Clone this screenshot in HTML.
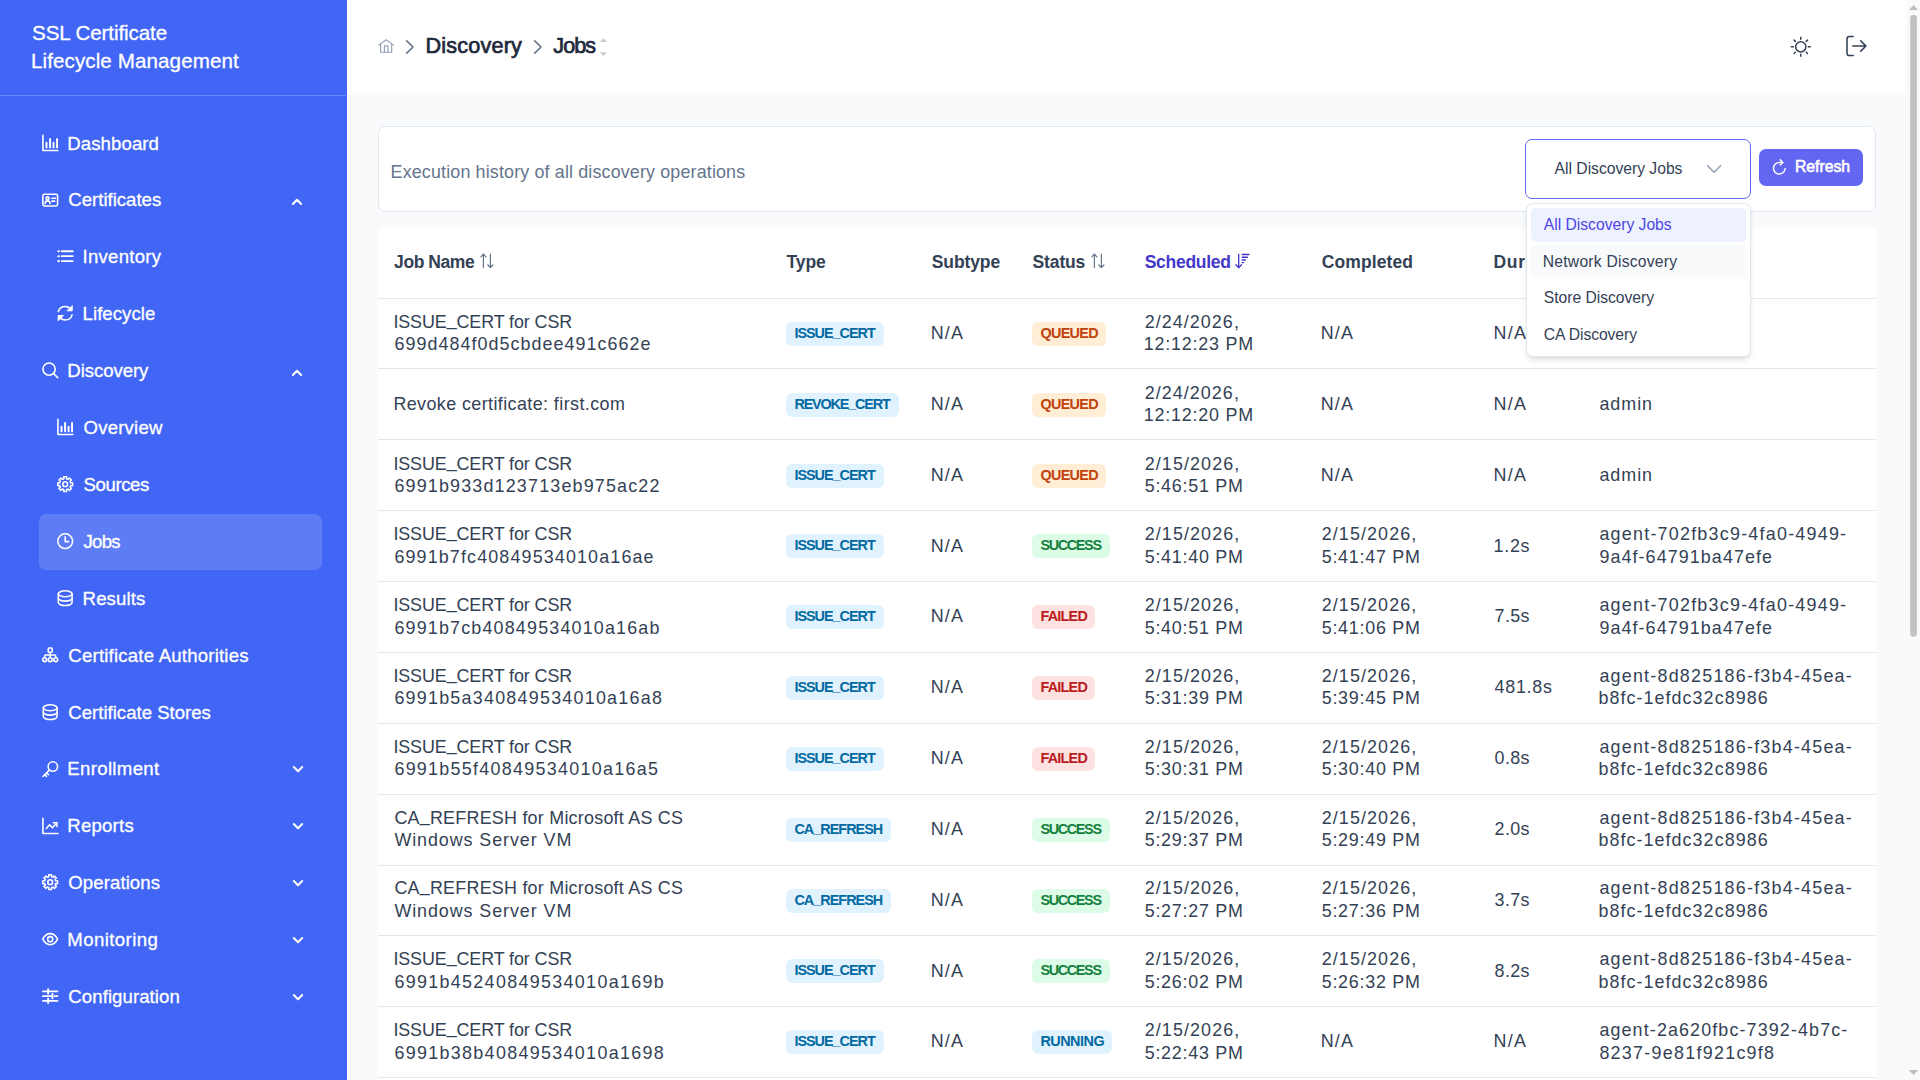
<!DOCTYPE html>
<html lang="en"><head><meta charset="utf-8"><title>SSL Certificate Lifecycle Management - Discovery Jobs</title>
<style>
*{box-sizing:border-box;margin:0;padding:0}
html,body{width:1920px;height:1080px;overflow:hidden;background:#f8fafc;font-family:"Liberation Sans", sans-serif;}
body{position:relative}
.t{position:absolute;white-space:nowrap;line-height:1;color:#334155}
.u{position:relative;top:-.15em}
.b .u{top:-.07em}
.t.w{color:#fff;-webkit-text-stroke:.3px #fff}
.ic{position:absolute;display:block;line-height:0}
.ic svg{display:block;overflow:visible}
#sidebar{position:absolute;left:0;top:0;width:347px;height:1080px;background:#4166f5;color:#fff}
.sb-line{position:absolute;left:0;top:95px;width:346px;height:1px;background:rgba(255,255,255,.22)}
.sb-active{position:absolute;background:rgba(255,255,255,.15);border-radius:7px}
#topbar{position:absolute;left:347px;top:0;width:1560px;height:95px;background:#fff}
#topbar .t,#topbar .ic{margin-left:-347px}
#white{position:absolute;left:347px;top:0;width:1px;height:1080px;background:#fff}
#card{position:absolute;left:378px;top:126px;width:1498px;height:86px;background:#fff;border:1px solid #e2e8f0;border-radius:7px}
#dd{position:absolute;left:1525.2px;top:139.2px;width:225.6px;height:59.6px;background:#fff;border:1px solid #6366f1;border-radius:7px}
#btn{position:absolute;left:1759px;top:149px;width:104.2px;height:37px;background:#6366f1;border-radius:7px}
#table{position:absolute;left:378px;top:228px;width:1498px;height:852px;background:#fff}
.hl{position:absolute;left:0;width:1498px;height:1px;background:#e2e8f0;margin-top:-228px}
.badge{position:absolute;height:24px;border-radius:6px}
#panel{position:absolute;left:1526.2px;top:203.4px;width:224.6px;height:153.4px;background:#fff;border:1px solid #e2e8f0;border-radius:7px;box-shadow:0 4px 6px -1px rgba(0,0,0,.1),0 2px 4px -2px rgba(0,0,0,.1)}
.opt{position:absolute;left:3.8px;width:215.2px;height:33.4px;border-radius:4.5px}
.opt.sel{background:#eef2ff}
.opt.hov{background:#f8fafc}
#sbar{position:absolute;left:1907px;top:0;width:13px;height:1080px;background:#f9fafc}
</style></head>
<body>
<div id="white"></div>
<div id="sidebar">
<div class="sb-line"></div>
<span class="t w" style="left:32.00px;top:23.00px;font-size:20.6px;letter-spacing:-0.100px;">SSL Certificate</span>
<span class="t w" style="left:31.00px;top:51.00px;font-size:20.6px;letter-spacing:0.088px;">Lifecycle Management</span>
<div class="sb-active" style="left:39px;top:514.25px;width:283px;height:55.25px"></div>
<span class="ic" style="left:41.70px;top:134.80px;"><svg width="16.4" height="16.4" viewBox="0 0 16 16" fill="none" stroke="currentColor" stroke-width="1.55" stroke-linecap="round" stroke-linejoin="round" ><path d="M0.9 0.4V15.1H15.6"/><path d="M4.4 7.6V12.1M7.9 3.8V12.1M11.3 7.6V12.1M14.7 3.8V12.1" stroke-width="1.9"/></svg></span>
<span class="t w" style="left:67.30px;top:135.00px;font-size:18.6px;letter-spacing:0.085px;">Dashboard</span>
<span class="ic" style="left:41.70px;top:191.70px;"><svg width="16.4" height="16.4" viewBox="0 0 16 16" fill="none" stroke="currentColor" stroke-width="1.55" stroke-linecap="round" stroke-linejoin="round" ><rect x="0.8" y="2.2" width="14.4" height="11.4" rx="1.6"/><circle cx="5.4" cy="6.2" r="1.45"/><path d="M2.9 11.3C3.1 9.4 4.2 8.7 5.4 8.7S7.7 9.4 7.9 11.3"/><path d="M9.8 6.1H13M9.8 9H12.2" stroke-width="1.7"/></svg></span>
<span class="t w" style="left:68.30px;top:191.00px;font-size:18.6px;letter-spacing:-0.009px;">Certificates</span>
<svg class="ic" style="left:290px;top:196px" width="14" height="12" viewBox="0 0 14 12" fill="none" stroke="#fff" stroke-width="2" stroke-linecap="round" stroke-linejoin="round"><path d="M2.9 8L7 3.7L11.1 8"/></svg>
<span class="ic" style="left:57.00px;top:248.00px;"><svg width="16.4" height="16.4" viewBox="0 0 16 16" fill="none" stroke="currentColor" stroke-width="1.55" stroke-linecap="round" stroke-linejoin="round" ><path d="M4.6 3.2H15.4M4.6 8H15.4M4.6 12.8H15.4" stroke-width="1.8"/><path d="M1.3 3.2H1.9M1.3 8H1.9M1.3 12.8H1.9" stroke-width="2"/></svg></span>
<span class="t w" style="left:82.60px;top:248.00px;font-size:18.6px;letter-spacing:0.239px;">Inventory</span>
<span class="ic" style="left:57.00px;top:304.80px;"><svg width="16.4" height="16.4" viewBox="0 0 16 16" fill="none" stroke="currentColor" stroke-width="1.55" stroke-linecap="round" stroke-linejoin="round" ><path d="M1.3 6.4C2.1 3.3 4.8 1.4 8 1.4C10.3 1.4 12.2 2.4 13.6 4.2"/><path d="M14.9 0.9V5.7H10.1Z" fill="currentColor" stroke-width="0.9"/><path d="M14.7 9.6C13.9 12.7 11.2 14.6 8 14.6C5.7 14.6 3.8 13.6 2.4 11.8"/><path d="M1.1 15.1V10.3H5.9Z" fill="currentColor" stroke-width="0.9"/></svg></span>
<span class="t w" style="left:82.60px;top:305.00px;font-size:18.6px;letter-spacing:0.044px;">Lifecycle</span>
<span class="ic" style="left:41.70px;top:361.80px;"><svg width="16.4" height="16.4" viewBox="0 0 16 16" fill="none" stroke="currentColor" stroke-width="1.55" stroke-linecap="round" stroke-linejoin="round" ><circle cx="6.9" cy="6.9" r="6"/><path d="M11.4 11.4L15.4 15.4"/></svg></span>
<span class="t w" style="left:67.30px;top:362.00px;font-size:18.6px;letter-spacing:-0.072px;">Discovery</span>
<svg class="ic" style="left:290px;top:367px" width="14" height="12" viewBox="0 0 14 12" fill="none" stroke="#fff" stroke-width="2" stroke-linecap="round" stroke-linejoin="round"><path d="M2.9 8L7 3.7L11.1 8"/></svg>
<span class="ic" style="left:57.00px;top:418.80px;"><svg width="16.4" height="16.4" viewBox="0 0 16 16" fill="none" stroke="currentColor" stroke-width="1.55" stroke-linecap="round" stroke-linejoin="round" ><path d="M0.9 0.4V15.1H15.6"/><path d="M4.4 7.6V12.1M7.9 3.8V12.1M11.3 7.6V12.1M14.7 3.8V12.1" stroke-width="1.9"/></svg></span>
<span class="t w" style="left:83.60px;top:419.00px;font-size:18.6px;letter-spacing:0.184px;">Overview</span>
<span class="ic" style="left:57.00px;top:475.80px;"><svg width="16.4" height="16.4" viewBox="0 0 16 16" fill="none" stroke="currentColor" stroke-width="1.55" stroke-linecap="round" stroke-linejoin="round" ><circle cx="8" cy="8" r="2.35" stroke-width="1.5"/><path d="M6.53 0.80 L9.47 0.80 L9.28 2.65 L10.87 3.31 L12.06 1.87 L14.13 3.94 L12.69 5.13 L13.35 6.72 L15.20 6.53 L15.20 9.47 L13.35 9.28 L12.69 10.87 L14.13 12.06 L12.06 14.13 L10.87 12.69 L9.28 13.35 L9.47 15.20 L6.53 15.20 L6.72 13.35 L5.13 12.69 L3.94 14.13 L1.87 12.06 L3.31 10.87 L2.65 9.28 L0.80 9.47 L0.80 6.53 L2.65 6.72 L3.31 5.13 L1.87 3.94 L3.94 1.87 L5.13 3.31 L6.72 2.65Z" stroke-width="1.45"/></svg></span>
<span class="t w" style="left:83.60px;top:476.00px;font-size:18.6px;letter-spacing:-0.427px;">Sources</span>
<span class="ic" style="left:57.00px;top:532.80px;"><svg width="16.4" height="16.4" viewBox="0 0 16 16" fill="none" stroke="currentColor" stroke-width="1.55" stroke-linecap="round" stroke-linejoin="round" ><circle cx="8" cy="8" r="7.2"/><path d="M8 3.8V8.4H11.2"/></svg></span>
<span class="t w" style="left:83.60px;top:533.00px;font-size:18.6px;letter-spacing:-0.793px;">Jobs</span>
<span class="ic" style="left:57.00px;top:589.80px;"><svg width="16.4" height="16.4" viewBox="0 0 16 16" fill="none" stroke="currentColor" stroke-width="1.55" stroke-linecap="round" stroke-linejoin="round" ><ellipse cx="8" cy="3.7" rx="6.7" ry="2.9"/><path d="M1.3 3.7V12.3C1.3 13.9 4.3 15.2 8 15.2S14.7 13.9 14.7 12.3V3.7"/><path d="M1.3 8C1.3 9.6 4.3 10.9 8 10.9S14.7 9.6 14.7 8"/></svg></span>
<span class="t w" style="left:82.60px;top:590.00px;font-size:18.6px;letter-spacing:0.108px;">Results</span>
<span class="ic" style="left:41.70px;top:646.80px;"><svg width="16.4" height="16.4" viewBox="0 0 16 16" fill="none" stroke="currentColor" stroke-width="1.55" stroke-linecap="round" stroke-linejoin="round" ><rect x="6.1" y="1" width="3.8" height="4.2" rx="0.9"/><path d="M8 5.4V10.2M2.6 10.2V9C2.6 8.2 3.1 7.8 3.8 7.8H12.2C12.9 7.8 13.4 8.2 13.4 9V10.2"/><circle cx="2.6" cy="12.4" r="1.9"/><circle cx="8" cy="12.4" r="1.9"/><circle cx="13.4" cy="12.4" r="1.9"/></svg></span>
<span class="t w" style="left:68.30px;top:647.00px;font-size:18.6px;letter-spacing:0.208px;">Certificate Authorities</span>
<span class="ic" style="left:41.70px;top:703.80px;"><svg width="16.4" height="16.4" viewBox="0 0 16 16" fill="none" stroke="currentColor" stroke-width="1.55" stroke-linecap="round" stroke-linejoin="round" ><ellipse cx="8" cy="3.7" rx="6.7" ry="2.9"/><path d="M1.3 3.7V12.3C1.3 13.9 4.3 15.2 8 15.2S14.7 13.9 14.7 12.3V3.7"/><path d="M1.3 8C1.3 9.6 4.3 10.9 8 10.9S14.7 9.6 14.7 8"/></svg></span>
<span class="t w" style="left:68.30px;top:704.00px;font-size:18.6px;">Certificate Stores</span>
<span class="ic" style="left:41.70px;top:760.80px;"><svg width="16.4" height="16.4" viewBox="0 0 16 16" fill="none" stroke="currentColor" stroke-width="1.55" stroke-linecap="round" stroke-linejoin="round" ><circle cx="10.6" cy="5.4" r="4.6"/><path d="M7.3 8.7L0.9 15.1M2.8 13.4L4.4 15M4.6 11.6L6.4 13.4" /></svg></span>
<span class="t w" style="left:67.30px;top:760.00px;font-size:18.6px;letter-spacing:0.332px;">Enrollment</span>
<svg class="ic" style="left:290.5px;top:763px" width="14" height="12" viewBox="0 0 14 12" fill="none" stroke="#fff" stroke-width="2" stroke-linecap="round" stroke-linejoin="round"><path d="M2.8 4L7 8.2L11.2 4"/></svg>
<span class="ic" style="left:41.70px;top:817.60px;"><svg width="16.4" height="16.4" viewBox="0 0 16 16" fill="none" stroke="currentColor" stroke-width="1.55" stroke-linecap="round" stroke-linejoin="round" ><path d="M0.9 0.4V15.1H15.6"/><path d="M4.2 10.2L7.4 6.6L10.2 9.6L14.2 5.2" stroke-width="1.5"/><path d="M11 4.7H14.6V8.3" stroke-width="1.5"/></svg></span>
<span class="t w" style="left:67.30px;top:817.00px;font-size:18.6px;letter-spacing:0.215px;">Reports</span>
<svg class="ic" style="left:290.5px;top:820px" width="14" height="12" viewBox="0 0 14 12" fill="none" stroke="#fff" stroke-width="2" stroke-linecap="round" stroke-linejoin="round"><path d="M2.8 4L7 8.2L11.2 4"/></svg>
<span class="ic" style="left:41.70px;top:873.80px;"><svg width="16.4" height="16.4" viewBox="0 0 16 16" fill="none" stroke="currentColor" stroke-width="1.55" stroke-linecap="round" stroke-linejoin="round" ><circle cx="8" cy="8" r="2.35" stroke-width="1.5"/><path d="M6.53 0.80 L9.47 0.80 L9.28 2.65 L10.87 3.31 L12.06 1.87 L14.13 3.94 L12.69 5.13 L13.35 6.72 L15.20 6.53 L15.20 9.47 L13.35 9.28 L12.69 10.87 L14.13 12.06 L12.06 14.13 L10.87 12.69 L9.28 13.35 L9.47 15.20 L6.53 15.20 L6.72 13.35 L5.13 12.69 L3.94 14.13 L1.87 12.06 L3.31 10.87 L2.65 9.28 L0.80 9.47 L0.80 6.53 L2.65 6.72 L3.31 5.13 L1.87 3.94 L3.94 1.87 L5.13 3.31 L6.72 2.65Z" stroke-width="1.45"/></svg></span>
<span class="t w" style="left:68.30px;top:874.00px;font-size:18.6px;letter-spacing:0.083px;">Operations</span>
<svg class="ic" style="left:290.5px;top:877px" width="14" height="12" viewBox="0 0 14 12" fill="none" stroke="#fff" stroke-width="2" stroke-linecap="round" stroke-linejoin="round"><path d="M2.8 4L7 8.2L11.2 4"/></svg>
<span class="ic" style="left:41.70px;top:931.10px;"><svg width="16.4" height="16.4" viewBox="0 0 16 16" fill="none" stroke="currentColor" stroke-width="1.55" stroke-linecap="round" stroke-linejoin="round" ><path d="M0.8 8C2.6 4.4 5.1 2.6 8 2.6S13.4 4.4 15.2 8C13.4 11.6 10.9 13.4 8 13.4S2.6 11.6 0.8 8Z"/><circle cx="8" cy="8" r="2.5"/></svg></span>
<span class="t w" style="left:67.30px;top:931.00px;font-size:18.6px;letter-spacing:0.414px;">Monitoring</span>
<svg class="ic" style="left:290.5px;top:934px" width="14" height="12" viewBox="0 0 14 12" fill="none" stroke="#fff" stroke-width="2" stroke-linecap="round" stroke-linejoin="round"><path d="M2.8 4L7 8.2L11.2 4"/></svg>
<span class="ic" style="left:41.70px;top:988.00px;"><svg width="16.4" height="16.4" viewBox="0 0 16 16" fill="none" stroke="currentColor" stroke-width="1.55" stroke-linecap="round" stroke-linejoin="round" ><path d="M0.9 3.4H15.1M0.9 8H9.6M12.4 8H15.1M0.9 12.6H15.1" stroke-width="1.7"/><path d="M6 1.3V5.5M10.2 5.9V10.1M6 10.5V14.7" stroke-width="1.9"/></svg></span>
<span class="t w" style="left:68.30px;top:988.00px;font-size:18.6px;letter-spacing:0.078px;">Configuration</span>
<svg class="ic" style="left:290.5px;top:991px" width="14" height="12" viewBox="0 0 14 12" fill="none" stroke="#fff" stroke-width="2" stroke-linecap="round" stroke-linejoin="round"><path d="M2.8 4L7 8.2L11.2 4"/></svg>
</div>
<div id="topbar">
<span class="ic" style="left:377.6px;top:38.4px;color:#94a3b8"><svg width="16.3" height="16" viewBox="0 0 16.8 16" fill="none" stroke="currentColor" stroke-width="1.2" stroke-linejoin="round" stroke-linecap="round"><path d="M0.8 7.1L8.4 1.6L16 7.1"/><path d="M2.7 5.9V14.4H14.1V5.9"/><path d="M6.6 14.4V7.8H10.2V14.4"/></svg></span>
<span class="ic" style="left:405px;top:39.2px;color:#64748b"><svg width="10" height="16" viewBox="0 0 10 16" fill="none" stroke="currentColor" stroke-width="1.6" stroke-linecap="round" stroke-linejoin="round"><path d="M1.7 1.9L8.0 8L1.7 14.1"/></svg></span>
<span class="t" style="left:425.60px;top:35.00px;font-size:21.6px;color:#1e293b;letter-spacing:0.176px;-webkit-text-stroke:0.7px currentColor;">Discovery</span>
<span class="ic" style="left:533.2px;top:39.2px;color:#64748b"><svg width="10" height="16" viewBox="0 0 10 16" fill="none" stroke="currentColor" stroke-width="1.6" stroke-linecap="round" stroke-linejoin="round"><path d="M1.7 1.9L8.0 8L1.7 14.1"/></svg></span>
<span class="t" style="left:553.30px;top:35.00px;font-size:21.6px;color:#1e293b;letter-spacing:-0.939px;-webkit-text-stroke:0.7px currentColor;">Jobs</span>
<svg class="ic" style="left:600px;top:38px" width="7" height="18" viewBox="0 0 7 18"><path d="M0 4L3.5 0.2L7 4Z M0 14.2L3.5 18L7 14.2Z" fill="#c9c9c9"/></svg>
<span class="ic" style="left:1790.1px;top:35.7px;color:#334155"><svg width="21.6" height="21.6" viewBox="0 0 21.6 21.6" fill="none" stroke="currentColor" stroke-width="1.5" stroke-linecap="round"><circle cx="10.8" cy="10.8" r="5.1"/><path d="M10.8 1.3V3.3M10.8 18.3V20.3M1.3 10.8H3.3M18.3 10.8H20.3M4.1 4.1L5.4 5.4M16.2 16.2L17.5 17.5M4.1 17.5L5.4 16.2M16.2 5.4L17.5 4.1"/></svg></span>
<span class="ic" style="left:1845px;top:35.4px;color:#334155"><svg width="22.4" height="22" viewBox="0 0 22.4 22" fill="none" stroke="currentColor" stroke-width="1.55" stroke-linecap="round" stroke-linejoin="round"><path d="M8.2 1.5H4.3C2.9 1.5 2 2.4 2 3.8V18.2C2 19.6 2.9 20.5 4.3 20.5H8.2"/><path d="M7.8 11H21M15.8 5.9L21 11L15.8 16.1"/></svg></span>
</div>
<div id="card"></div>
<span class="t" style="left:390.60px;top:164.00px;font-size:17.9px;color:#64748b;letter-spacing:0.148px;">Execution history of all discovery operations</span>
<div id="dd"></div>
<span class="t" style="left:1554.60px;top:161.00px;font-size:15.7px;color:#334155;letter-spacing:-0.018px;">All Discovery Jobs</span>
<span class="ic" style="left:1705.8px;top:160.8px;color:#94a3b8"><svg width="16" height="16" viewBox="0 0 16 16" fill="none" stroke="currentColor" stroke-width="1.6" stroke-linecap="round" stroke-linejoin="round"><path d="M1.6 4.8L8.1 11.3L14.6 4.8"/></svg></span>
<div id="btn"></div>
<span class="ic" style="left:1772.3px;top:158.9px;color:#fff"><svg width="15" height="16" viewBox="0 0 16 17" fill="none" stroke="currentColor" stroke-width="1.55" stroke-linecap="round" stroke-linejoin="round"><path d="M14 10.1A6.2 6.2 0 1 1 8 3.6H11.4"/><path d="M8.8 0.9L11.6 3.6L8.8 6.3"/></svg></span>
<span class="t" style="left:1794.90px;top:159.00px;font-size:15.8px;color:#fff;letter-spacing:-0.021px;-webkit-text-stroke:0.6px currentColor;">Refresh</span>
<div id="table">
<div class="hl" style="top:298px"></div>
<div class="hl" style="top:368px"></div>
<div class="hl" style="top:439px"></div>
<div class="hl" style="top:510px"></div>
<div class="hl" style="top:581px"></div>
<div class="hl" style="top:652px"></div>
<div class="hl" style="top:723px"></div>
<div class="hl" style="top:794px"></div>
<div class="hl" style="top:865px"></div>
<div class="hl" style="top:935px"></div>
<div class="hl" style="top:1006px"></div>
<div class="hl" style="top:1077px"></div>
</div>
<span class="t" style="left:394.10px;top:254.00px;font-size:17.5px;font-weight:700;color:#334155;letter-spacing:-0.444px;">Job Name</span>
<span class="t" style="left:786.50px;top:254.00px;font-size:17.5px;font-weight:700;color:#334155;letter-spacing:-0.104px;">Type</span>
<span class="t" style="left:931.80px;top:254.00px;font-size:17.5px;font-weight:700;color:#334155;letter-spacing:-0.117px;">Subtype</span>
<span class="t" style="left:1032.60px;top:254.00px;font-size:17.5px;font-weight:700;color:#334155;letter-spacing:-0.150px;">Status</span>
<span class="t" style="left:1144.70px;top:254.00px;font-size:17.5px;font-weight:700;color:#4338ca;letter-spacing:-0.275px;">Scheduled</span>
<span class="t" style="left:1321.80px;top:254.00px;font-size:17.5px;font-weight:700;color:#334155;letter-spacing:0.083px;">Completed</span>
<span class="t" style="left:1493.60px;top:254.00px;font-size:17.5px;font-weight:700;color:#334155;letter-spacing:0.636px;">Duration</span>
<span class="t" style="left:1599.40px;top:254.00px;font-size:17.5px;font-weight:700;color:#334155;letter-spacing:0.062px;">Agent</span>
<span class="ic" style="left:480px;top:253.2px;color:#64748b"><svg width="14" height="16" viewBox="0 0 14 16" fill="none" stroke="currentColor" stroke-width="1.2" stroke-linecap="round" stroke-linejoin="round"><path d="M3.4 14.6V1.2M0.9 3.8L3.4 1.1L5.9 3.8"/><path d="M10.4 1.2V14.6M7.9 12L10.4 14.7L12.9 12"/></svg></span>
<span class="ic" style="left:1090.8px;top:253.2px;color:#64748b"><svg width="14" height="16" viewBox="0 0 14 16" fill="none" stroke="currentColor" stroke-width="1.2" stroke-linecap="round" stroke-linejoin="round"><path d="M3.4 14.6V1.2M0.9 3.8L3.4 1.1L5.9 3.8"/><path d="M10.4 1.2V14.6M7.9 12L10.4 14.7L12.9 12"/></svg></span>
<span class="ic" style="left:1235.4px;top:253.2px;color:#4338ca"><svg width="16" height="16" viewBox="0 0 16 16" fill="none" stroke="currentColor" stroke-width="1.3" stroke-linecap="round" stroke-linejoin="round"><path d="M3.7 1.2V14.4M0.9 11.8L3.7 14.7L6.5 11.8"/><path d="M7.2 1.5H14M7.2 4.3H12.4M7.2 7H10.4M7.2 9.6H8.6" stroke-width="1.4"/></svg></span>
<span class="t" style="left:393.40px;top:314.00px;font-size:17.9px;color:#334155;letter-spacing:-0.088px;">ISSUE<span class="u">_</span>CERT for CSR</span><span class="t" style="left:394.40px;top:336.00px;font-size:17.9px;color:#334155;letter-spacing:1.058px;">699d484f0d5cbdee491c662e</span>
<div class="badge" style="left:786px;top:322.00px;width:98px;background:#e0f2fe"></div><span class="t b" style="left:794.40px;top:326.00px;font-size:14.4px;font-weight:700;color:#0369a1;letter-spacing:-0.997px;">ISSUE<span class="u">_</span>CERT</span>
<span class="t" style="left:930.70px;top:325.00px;font-size:17.9px;color:#334155;letter-spacing:1.205px;">N/A</span>
<div class="badge" style="left:1032px;top:322.00px;width:74px;background:#ffedd5"></div><span class="t b" style="left:1040.40px;top:326.00px;font-size:14.4px;font-weight:700;color:#c2410c;letter-spacing:-0.675px;">QUEUED</span>
<span class="t" style="left:1144.70px;top:314.00px;font-size:17.9px;color:#334155;letter-spacing:1.068px;">2/24/2026,</span><span class="t" style="left:1143.70px;top:336.00px;font-size:17.9px;color:#334155;letter-spacing:0.796px;">12:12:23 PM</span>
<span class="t" style="left:1320.70px;top:325.00px;font-size:17.9px;color:#334155;letter-spacing:1.205px;">N/A</span>
<span class="t" style="left:1493.60px;top:325.00px;font-size:17.9px;color:#334155;letter-spacing:1.205px;">N/A</span>
<span class="t" style="left:1599.40px;top:325.00px;font-size:17.9px;color:#334155;letter-spacing:0.981px;">admin</span>
<span class="t" style="left:393.40px;top:396.00px;font-size:17.9px;color:#334155;letter-spacing:0.417px;">Revoke certificate: first.com</span>
<div class="badge" style="left:786px;top:392.82px;width:113.3px;background:#e0f2fe"></div><span class="t b" style="left:794.40px;top:397.00px;font-size:14.4px;font-weight:700;color:#0369a1;letter-spacing:-1.156px;">REVOKE<span class="u">_</span>CERT</span>
<span class="t" style="left:930.70px;top:396.00px;font-size:17.9px;color:#334155;letter-spacing:1.205px;">N/A</span>
<div class="badge" style="left:1032px;top:392.82px;width:74px;background:#ffedd5"></div><span class="t b" style="left:1040.40px;top:397.00px;font-size:14.4px;font-weight:700;color:#c2410c;letter-spacing:-0.675px;">QUEUED</span>
<span class="t" style="left:1144.70px;top:385.00px;font-size:17.9px;color:#334155;letter-spacing:1.068px;">2/24/2026,</span><span class="t" style="left:1143.70px;top:407.00px;font-size:17.9px;color:#334155;letter-spacing:0.796px;">12:12:20 PM</span>
<span class="t" style="left:1320.70px;top:396.00px;font-size:17.9px;color:#334155;letter-spacing:1.205px;">N/A</span>
<span class="t" style="left:1493.60px;top:396.00px;font-size:17.9px;color:#334155;letter-spacing:1.205px;">N/A</span>
<span class="t" style="left:1599.40px;top:396.00px;font-size:17.9px;color:#334155;letter-spacing:0.981px;">admin</span>
<span class="t" style="left:393.40px;top:456.00px;font-size:17.9px;color:#334155;letter-spacing:-0.088px;">ISSUE<span class="u">_</span>CERT for CSR</span><span class="t" style="left:394.40px;top:478.00px;font-size:17.9px;color:#334155;letter-spacing:1.185px;">6991b933d123713eb975ac22</span>
<div class="badge" style="left:786px;top:463.64px;width:98px;background:#e0f2fe"></div><span class="t b" style="left:794.40px;top:468.00px;font-size:14.4px;font-weight:700;color:#0369a1;letter-spacing:-0.997px;">ISSUE<span class="u">_</span>CERT</span>
<span class="t" style="left:930.70px;top:467.00px;font-size:17.9px;color:#334155;letter-spacing:1.205px;">N/A</span>
<div class="badge" style="left:1032px;top:463.64px;width:74px;background:#ffedd5"></div><span class="t b" style="left:1040.40px;top:468.00px;font-size:14.4px;font-weight:700;color:#c2410c;letter-spacing:-0.675px;">QUEUED</span>
<span class="t" style="left:1144.70px;top:456.00px;font-size:17.9px;color:#334155;letter-spacing:1.112px;">2/15/2026,</span><span class="t" style="left:1144.70px;top:478.00px;font-size:17.9px;color:#334155;letter-spacing:0.745px;">5:46:51 PM</span>
<span class="t" style="left:1320.70px;top:467.00px;font-size:17.9px;color:#334155;letter-spacing:1.205px;">N/A</span>
<span class="t" style="left:1493.60px;top:467.00px;font-size:17.9px;color:#334155;letter-spacing:1.205px;">N/A</span>
<span class="t" style="left:1599.40px;top:467.00px;font-size:17.9px;color:#334155;letter-spacing:0.981px;">admin</span>
<span class="t" style="left:393.40px;top:526.00px;font-size:17.9px;color:#334155;letter-spacing:-0.088px;">ISSUE<span class="u">_</span>CERT for CSR</span><span class="t" style="left:394.40px;top:549.00px;font-size:17.9px;color:#334155;letter-spacing:1.145px;">6991b7fc40849534010a16ae</span>
<div class="badge" style="left:786px;top:534.46px;width:98px;background:#e0f2fe"></div><span class="t b" style="left:794.40px;top:538.00px;font-size:14.4px;font-weight:700;color:#0369a1;letter-spacing:-0.997px;">ISSUE<span class="u">_</span>CERT</span>
<span class="t" style="left:930.70px;top:538.00px;font-size:17.9px;color:#334155;letter-spacing:1.205px;">N/A</span>
<div class="badge" style="left:1032px;top:534.46px;width:77.9px;background:#dcfce7"></div><span class="t b" style="left:1040.40px;top:538.00px;font-size:14.4px;font-weight:700;color:#15803d;letter-spacing:-1.329px;">SUCCESS</span>
<span class="t" style="left:1144.70px;top:526.00px;font-size:17.9px;color:#334155;letter-spacing:1.112px;">2/15/2026,</span><span class="t" style="left:1144.70px;top:549.00px;font-size:17.9px;color:#334155;letter-spacing:0.745px;">5:41:40 PM</span>
<span class="t" style="left:1321.70px;top:526.00px;font-size:17.9px;color:#334155;letter-spacing:1.112px;">2/15/2026,</span><span class="t" style="left:1321.70px;top:549.00px;font-size:17.9px;color:#334155;letter-spacing:0.745px;">5:41:47 PM</span>
<span class="t" style="left:1493.60px;top:538.00px;font-size:17.9px;color:#334155;letter-spacing:0.710px;">1.2s</span>
<span class="t" style="left:1599.40px;top:526.00px;font-size:17.9px;color:#334155;letter-spacing:1.243px;">agent-702fb3c9-4fa0-4949-</span><span class="t" style="left:1599.40px;top:549.00px;font-size:17.9px;color:#334155;letter-spacing:1.091px;">9a4f-64791ba47efe</span>
<span class="t" style="left:393.40px;top:597.00px;font-size:17.9px;color:#334155;letter-spacing:-0.088px;">ISSUE<span class="u">_</span>CERT for CSR</span><span class="t" style="left:394.40px;top:620.00px;font-size:17.9px;color:#334155;letter-spacing:1.185px;">6991b7cb40849534010a16ab</span>
<div class="badge" style="left:786px;top:605.28px;width:98px;background:#e0f2fe"></div><span class="t b" style="left:794.40px;top:609.00px;font-size:14.4px;font-weight:700;color:#0369a1;letter-spacing:-0.997px;">ISSUE<span class="u">_</span>CERT</span>
<span class="t" style="left:930.70px;top:608.00px;font-size:17.9px;color:#334155;letter-spacing:1.205px;">N/A</span>
<div class="badge" style="left:1032px;top:605.28px;width:62.9px;background:#fee2e2"></div><span class="t b" style="left:1040.40px;top:609.00px;font-size:14.4px;font-weight:700;color:#b91c1c;letter-spacing:-0.755px;">FAILED</span>
<span class="t" style="left:1144.70px;top:597.00px;font-size:17.9px;color:#334155;letter-spacing:1.112px;">2/15/2026,</span><span class="t" style="left:1144.70px;top:620.00px;font-size:17.9px;color:#334155;letter-spacing:0.745px;">5:40:51 PM</span>
<span class="t" style="left:1321.70px;top:597.00px;font-size:17.9px;color:#334155;letter-spacing:1.112px;">2/15/2026,</span><span class="t" style="left:1321.70px;top:620.00px;font-size:17.9px;color:#334155;letter-spacing:0.745px;">5:41:06 PM</span>
<span class="t" style="left:1494.60px;top:608.00px;font-size:17.9px;color:#334155;letter-spacing:0.377px;">7.5s</span>
<span class="t" style="left:1599.40px;top:597.00px;font-size:17.9px;color:#334155;letter-spacing:1.243px;">agent-702fb3c9-4fa0-4949-</span><span class="t" style="left:1599.40px;top:620.00px;font-size:17.9px;color:#334155;letter-spacing:1.091px;">9a4f-64791ba47efe</span>
<span class="t" style="left:393.40px;top:668.00px;font-size:17.9px;color:#334155;letter-spacing:-0.088px;">ISSUE<span class="u">_</span>CERT for CSR</span><span class="t" style="left:394.40px;top:690.00px;font-size:17.9px;color:#334155;letter-spacing:1.246px;">6991b5a340849534010a16a8</span>
<div class="badge" style="left:786px;top:676.10px;width:98px;background:#e0f2fe"></div><span class="t b" style="left:794.40px;top:680.00px;font-size:14.4px;font-weight:700;color:#0369a1;letter-spacing:-0.997px;">ISSUE<span class="u">_</span>CERT</span>
<span class="t" style="left:930.70px;top:679.00px;font-size:17.9px;color:#334155;letter-spacing:1.205px;">N/A</span>
<div class="badge" style="left:1032px;top:676.10px;width:62.9px;background:#fee2e2"></div><span class="t b" style="left:1040.40px;top:680.00px;font-size:14.4px;font-weight:700;color:#b91c1c;letter-spacing:-0.755px;">FAILED</span>
<span class="t" style="left:1144.70px;top:668.00px;font-size:17.9px;color:#334155;letter-spacing:1.112px;">2/15/2026,</span><span class="t" style="left:1144.70px;top:690.00px;font-size:17.9px;color:#334155;letter-spacing:0.745px;">5:31:39 PM</span>
<span class="t" style="left:1321.70px;top:668.00px;font-size:17.9px;color:#334155;letter-spacing:1.112px;">2/15/2026,</span><span class="t" style="left:1321.70px;top:690.00px;font-size:17.9px;color:#334155;letter-spacing:0.745px;">5:39:45 PM</span>
<span class="t" style="left:1494.60px;top:679.00px;font-size:17.9px;color:#334155;letter-spacing:0.726px;">481.8s</span>
<span class="t" style="left:1599.40px;top:668.00px;font-size:17.9px;color:#334155;letter-spacing:1.231px;">agent-8d825186-f3b4-45ea-</span><span class="t" style="left:1598.40px;top:690.00px;font-size:17.9px;color:#334155;letter-spacing:1.067px;">b8fc-1efdc32c8986</span>
<span class="t" style="left:393.40px;top:739.00px;font-size:17.9px;color:#334155;letter-spacing:-0.088px;">ISSUE<span class="u">_</span>CERT for CSR</span><span class="t" style="left:394.40px;top:761.00px;font-size:17.9px;color:#334155;letter-spacing:1.288px;">6991b55f40849534010a16a5</span>
<div class="badge" style="left:786px;top:746.92px;width:98px;background:#e0f2fe"></div><span class="t b" style="left:794.40px;top:751.00px;font-size:14.4px;font-weight:700;color:#0369a1;letter-spacing:-0.997px;">ISSUE<span class="u">_</span>CERT</span>
<span class="t" style="left:930.70px;top:750.00px;font-size:17.9px;color:#334155;letter-spacing:1.205px;">N/A</span>
<div class="badge" style="left:1032px;top:746.92px;width:62.9px;background:#fee2e2"></div><span class="t b" style="left:1040.40px;top:751.00px;font-size:14.4px;font-weight:700;color:#b91c1c;letter-spacing:-0.755px;">FAILED</span>
<span class="t" style="left:1144.70px;top:739.00px;font-size:17.9px;color:#334155;letter-spacing:1.112px;">2/15/2026,</span><span class="t" style="left:1144.70px;top:761.00px;font-size:17.9px;color:#334155;letter-spacing:0.745px;">5:30:31 PM</span>
<span class="t" style="left:1321.70px;top:739.00px;font-size:17.9px;color:#334155;letter-spacing:1.112px;">2/15/2026,</span><span class="t" style="left:1321.70px;top:761.00px;font-size:17.9px;color:#334155;letter-spacing:0.745px;">5:30:40 PM</span>
<span class="t" style="left:1494.60px;top:750.00px;font-size:17.9px;color:#334155;letter-spacing:0.377px;">0.8s</span>
<span class="t" style="left:1599.40px;top:739.00px;font-size:17.9px;color:#334155;letter-spacing:1.231px;">agent-8d825186-f3b4-45ea-</span><span class="t" style="left:1598.40px;top:761.00px;font-size:17.9px;color:#334155;letter-spacing:1.067px;">b8fc-1efdc32c8986</span>
<span class="t" style="left:394.40px;top:810.00px;font-size:17.9px;color:#334155;letter-spacing:0.248px;">CA<span class="u">_</span>REFRESH for Microsoft AS CS</span><span class="t" style="left:394.40px;top:832.00px;font-size:17.9px;color:#334155;letter-spacing:0.929px;">Windows Server VM</span>
<div class="badge" style="left:786px;top:817.74px;width:105px;background:#e0f2fe"></div><span class="t b" style="left:794.40px;top:822.00px;font-size:14.4px;font-weight:700;color:#0369a1;letter-spacing:-0.973px;">CA<span class="u">_</span>REFRESH</span>
<span class="t" style="left:930.70px;top:821.00px;font-size:17.9px;color:#334155;letter-spacing:1.205px;">N/A</span>
<div class="badge" style="left:1032px;top:817.74px;width:77.9px;background:#dcfce7"></div><span class="t b" style="left:1040.40px;top:822.00px;font-size:14.4px;font-weight:700;color:#15803d;letter-spacing:-1.329px;">SUCCESS</span>
<span class="t" style="left:1144.70px;top:810.00px;font-size:17.9px;color:#334155;letter-spacing:1.112px;">2/15/2026,</span><span class="t" style="left:1144.70px;top:832.00px;font-size:17.9px;color:#334155;letter-spacing:0.745px;">5:29:37 PM</span>
<span class="t" style="left:1321.70px;top:810.00px;font-size:17.9px;color:#334155;letter-spacing:1.112px;">2/15/2026,</span><span class="t" style="left:1321.70px;top:832.00px;font-size:17.9px;color:#334155;letter-spacing:0.745px;">5:29:49 PM</span>
<span class="t" style="left:1494.60px;top:821.00px;font-size:17.9px;color:#334155;letter-spacing:0.377px;">2.0s</span>
<span class="t" style="left:1599.40px;top:810.00px;font-size:17.9px;color:#334155;letter-spacing:1.231px;">agent-8d825186-f3b4-45ea-</span><span class="t" style="left:1598.40px;top:832.00px;font-size:17.9px;color:#334155;letter-spacing:1.067px;">b8fc-1efdc32c8986</span>
<span class="t" style="left:394.40px;top:880.00px;font-size:17.9px;color:#334155;letter-spacing:0.248px;">CA<span class="u">_</span>REFRESH for Microsoft AS CS</span><span class="t" style="left:394.40px;top:903.00px;font-size:17.9px;color:#334155;letter-spacing:0.929px;">Windows Server VM</span>
<div class="badge" style="left:786px;top:888.56px;width:105px;background:#e0f2fe"></div><span class="t b" style="left:794.40px;top:893.00px;font-size:14.4px;font-weight:700;color:#0369a1;letter-spacing:-0.973px;">CA<span class="u">_</span>REFRESH</span>
<span class="t" style="left:930.70px;top:892.00px;font-size:17.9px;color:#334155;letter-spacing:1.205px;">N/A</span>
<div class="badge" style="left:1032px;top:888.56px;width:77.9px;background:#dcfce7"></div><span class="t b" style="left:1040.40px;top:893.00px;font-size:14.4px;font-weight:700;color:#15803d;letter-spacing:-1.329px;">SUCCESS</span>
<span class="t" style="left:1144.70px;top:880.00px;font-size:17.9px;color:#334155;letter-spacing:1.112px;">2/15/2026,</span><span class="t" style="left:1144.70px;top:903.00px;font-size:17.9px;color:#334155;letter-spacing:0.745px;">5:27:27 PM</span>
<span class="t" style="left:1321.70px;top:880.00px;font-size:17.9px;color:#334155;letter-spacing:1.112px;">2/15/2026,</span><span class="t" style="left:1321.70px;top:903.00px;font-size:17.9px;color:#334155;letter-spacing:0.745px;">5:27:36 PM</span>
<span class="t" style="left:1494.60px;top:892.00px;font-size:17.9px;color:#334155;letter-spacing:0.377px;">3.7s</span>
<span class="t" style="left:1599.40px;top:880.00px;font-size:17.9px;color:#334155;letter-spacing:1.231px;">agent-8d825186-f3b4-45ea-</span><span class="t" style="left:1598.40px;top:903.00px;font-size:17.9px;color:#334155;letter-spacing:1.067px;">b8fc-1efdc32c8986</span>
<span class="t" style="left:393.40px;top:951.00px;font-size:17.9px;color:#334155;letter-spacing:-0.088px;">ISSUE<span class="u">_</span>CERT for CSR</span><span class="t" style="left:394.40px;top:974.00px;font-size:17.9px;color:#334155;letter-spacing:1.328px;">6991b45240849534010a169b</span>
<div class="badge" style="left:786px;top:959.38px;width:98px;background:#e0f2fe"></div><span class="t b" style="left:794.40px;top:963.00px;font-size:14.4px;font-weight:700;color:#0369a1;letter-spacing:-0.997px;">ISSUE<span class="u">_</span>CERT</span>
<span class="t" style="left:930.70px;top:963.00px;font-size:17.9px;color:#334155;letter-spacing:1.205px;">N/A</span>
<div class="badge" style="left:1032px;top:959.38px;width:77.9px;background:#dcfce7"></div><span class="t b" style="left:1040.40px;top:963.00px;font-size:14.4px;font-weight:700;color:#15803d;letter-spacing:-1.329px;">SUCCESS</span>
<span class="t" style="left:1144.70px;top:951.00px;font-size:17.9px;color:#334155;letter-spacing:1.112px;">2/15/2026,</span><span class="t" style="left:1144.70px;top:974.00px;font-size:17.9px;color:#334155;letter-spacing:0.745px;">5:26:02 PM</span>
<span class="t" style="left:1321.70px;top:951.00px;font-size:17.9px;color:#334155;letter-spacing:1.112px;">2/15/2026,</span><span class="t" style="left:1321.70px;top:974.00px;font-size:17.9px;color:#334155;letter-spacing:0.745px;">5:26:32 PM</span>
<span class="t" style="left:1494.60px;top:963.00px;font-size:17.9px;color:#334155;letter-spacing:0.377px;">8.2s</span>
<span class="t" style="left:1599.40px;top:951.00px;font-size:17.9px;color:#334155;letter-spacing:1.231px;">agent-8d825186-f3b4-45ea-</span><span class="t" style="left:1598.40px;top:974.00px;font-size:17.9px;color:#334155;letter-spacing:1.067px;">b8fc-1efdc32c8986</span>
<span class="t" style="left:393.40px;top:1022.00px;font-size:17.9px;color:#334155;letter-spacing:-0.088px;">ISSUE<span class="u">_</span>CERT for CSR</span><span class="t" style="left:394.40px;top:1045.00px;font-size:17.9px;color:#334155;letter-spacing:1.328px;">6991b38b40849534010a1698</span>
<div class="badge" style="left:786px;top:1030.20px;width:98px;background:#e0f2fe"></div><span class="t b" style="left:794.40px;top:1034.00px;font-size:14.4px;font-weight:700;color:#0369a1;letter-spacing:-0.997px;">ISSUE<span class="u">_</span>CERT</span>
<span class="t" style="left:930.70px;top:1033.00px;font-size:17.9px;color:#334155;letter-spacing:1.205px;">N/A</span>
<div class="badge" style="left:1032px;top:1030.20px;width:79.9px;background:#e0f2fe"></div><span class="t b" style="left:1040.40px;top:1034.00px;font-size:14.4px;font-weight:700;color:#0369a1;letter-spacing:-0.493px;">RUNNING</span>
<span class="t" style="left:1144.70px;top:1022.00px;font-size:17.9px;color:#334155;letter-spacing:1.112px;">2/15/2026,</span><span class="t" style="left:1144.70px;top:1045.00px;font-size:17.9px;color:#334155;letter-spacing:0.745px;">5:22:43 PM</span>
<span class="t" style="left:1320.70px;top:1033.00px;font-size:17.9px;color:#334155;letter-spacing:1.205px;">N/A</span>
<span class="t" style="left:1493.60px;top:1033.00px;font-size:17.9px;color:#334155;letter-spacing:1.205px;">N/A</span>
<span class="t" style="left:1599.40px;top:1022.00px;font-size:17.9px;color:#334155;letter-spacing:1.127px;">agent-2a620fbc-7392-4b7c-</span><span class="t" style="left:1599.40px;top:1045.00px;font-size:17.9px;color:#334155;letter-spacing:1.279px;">8237-9e81f921c9f8</span>
<div id="panel"><div class="opt sel" style="top:3.8px;height:33.8px"></div><div class="opt hov" style="top:40.4px;height:34px"></div></div>
<span class="t" style="left:1543.80px;top:217.00px;font-size:15.7px;color:#4f46e5;letter-spacing:-0.018px;">All Discovery Jobs</span>
<span class="t" style="left:1542.80px;top:254.00px;font-size:15.7px;color:#334155;letter-spacing:0.218px;">Network Discovery</span>
<span class="t" style="left:1543.80px;top:290.00px;font-size:15.7px;color:#334155;letter-spacing:-0.034px;">Store Discovery</span>
<span class="t" style="left:1543.80px;top:327.00px;font-size:15.7px;color:#334155;letter-spacing:-0.088px;">CA Discovery</span>
<div id="sbar"><svg width="13" height="1080" viewBox="0 0 13 1080"><path d="M2 10L6.5 5L11 10Z M1.9 1070L6.5 1075L11.1 1070Z" fill="#bdbdbd"/><rect x="3.2" y="15" width="6.7" height="621.7" rx="3.35" fill="#c1c1c4"/></svg></div>
</body></html>
